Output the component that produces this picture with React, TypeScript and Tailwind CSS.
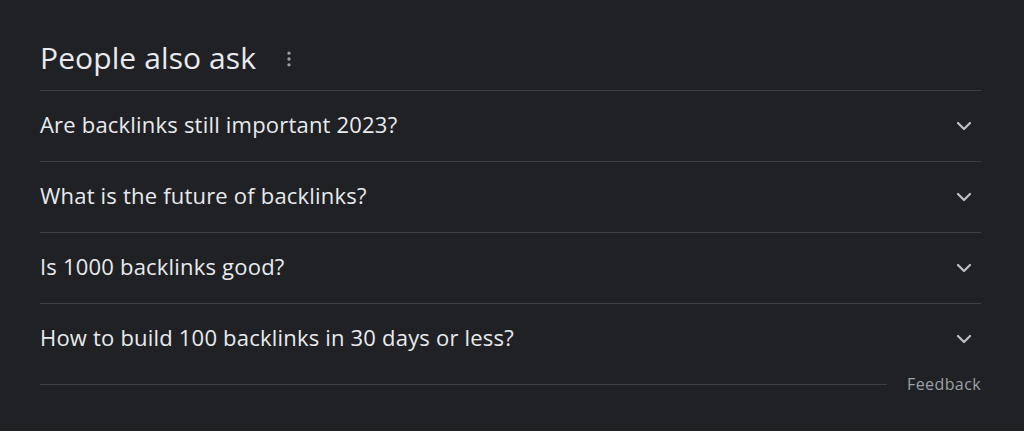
import { ChevronDown, MoreVertical } from "lucide-react";

const questions = [
  "Are backlinks still important 2023?",
  "What is the future of backlinks?",
  "Is 1000 backlinks good?",
  "How to build 100 backlinks in 30 days or less?",
];

export default function App() {
  return (
    <div className="h-[431px] w-[1024px] bg-[#202124] font-['Open_Sans',sans-serif] text-[#e8eaed]">
      <div className="ml-[40px] mr-[43px] pt-[33px]">
        <div className="flex h-[57px] items-start pt-[1px]">
          <h2 className="text-[30px] leading-[48px] tracking-[0.1px]">People also ask</h2>
          <MoreVertical size={20} className="ml-[23px] mt-[15px] text-[#9aa0a6]" />
        </div>
        <div className="border-t border-[#3c4043]">
          {questions.map((q) => (
            <div
              key={q}
              className="flex h-[71px] items-center justify-between border-b border-[#3c4043] pb-[3px] last:h-[70px] last:border-b-0"
            >
              <span className="text-[22px] tracking-[0.2px]">{q}</span>
              <ChevronDown size={24} strokeWidth={2.2} className="mr-[5px] mt-[2px] text-[#bdc1c6]" />
            </div>
          ))}
        </div>
        <div className="flex items-center gap-[20px]">
          <div className="h-px flex-1 bg-[#3c4043]" />
          <span className="text-[16px] leading-[20px] tracking-[0.4px] text-[#9aa0a6]">Feedback</span>
        </div>
      </div>
    </div>
  );
}
